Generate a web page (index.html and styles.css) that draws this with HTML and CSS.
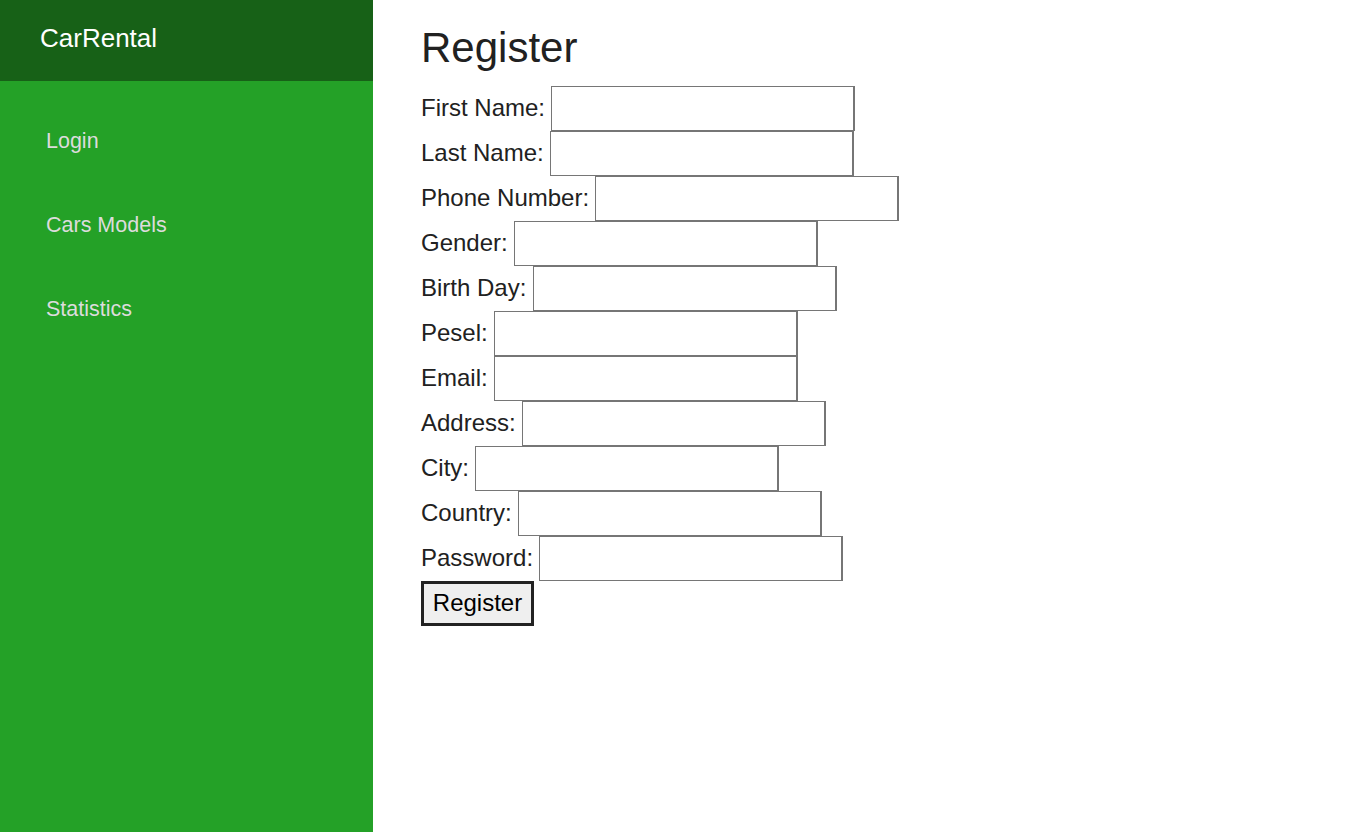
FILE: index.html
```html
<!DOCTYPE html>
<html>
<head>
<meta charset="utf-8">
<title>Register - CarRental</title>
<link rel="stylesheet" href="styles.css">
</head>
<body>
<aside class="sidebar">
  <div class="brand">CarRental</div>
  <nav class="nav">
    <a class="nav-item" href="#">Login</a>
    <a class="nav-item" href="#">Cars Models</a>
    <a class="nav-item" href="#">Statistics</a>
  </nav>
</aside>
<main class="main">
  <h1 class="title">Register</h1>
  <form class="form">
    <div class="row"><label>First Name:</label><input class="field" type="text"></div>
    <div class="row"><label>Last Name:</label><input class="field" type="text"></div>
    <div class="row"><label>Phone Number:</label><input class="field" type="text"></div>
    <div class="row"><label>Gender:</label><input class="field" type="text"></div>
    <div class="row"><label>Birth Day:</label><input class="field" type="text"></div>
    <div class="row"><label>Pesel:</label><input class="field" type="text"></div>
    <div class="row"><label>Email:</label><input class="field" type="text"></div>
    <div class="row"><label>Address:</label><input class="field" type="text"></div>
    <div class="row"><label>City:</label><input class="field" type="text"></div>
    <div class="row"><label>Country:</label><input class="field" type="text"></div>
    <div class="row"><label>Password:</label><input class="field" type="password"></div>
    <button class="submit" type="button">Register</button>
  </form>
</main>
</body>
</html>
```
FILE: styles.css
```css
html, body {
  margin: 0;
  padding: 0;
  height: 100%;
}
body {
  display: flex;
  font-family: "Liberation Sans", Arial, sans-serif;
  color: #212121;
  background: #ffffff;
}
.sidebar {
  width: 373px;
  flex: 0 0 373px;
  height: 832px;
  background: #24a127;
  display: flex;
  flex-direction: column;
}
.brand {
  height: 81px;
  background: #176117;
  color: #ffffff;
  font-size: 26px;
  padding-left: 40px;
  display: flex;
  align-items: center;
  box-sizing: border-box;
  padding-bottom: 4px;
}
.nav {
  display: flex;
  flex-direction: column;
  padding-top: 18px;
}
.nav-item {
  height: 84px;
  display: flex;
  align-items: center;
  padding-left: 46px;
  color: #dcdcdc;
  font-size: 21.5px;
  text-decoration: none;
}
.main {
  flex: 1;
  padding-left: 48px;
}
.title {
  font-size: 42px;
  font-weight: normal;
  margin: 24px 0 15px 0;
  line-height: 47px;
}
.form {
  display: flex;
  flex-direction: column;
  align-items: flex-start;
}
.row {
  display: flex;
  align-items: center;
  height: 45px;
  font-size: 24px;
}
.row label {
  margin-right: 6.4px;
  padding-bottom: 2px;
}
.field {
  width: 304px;
  height: 45px;
  box-sizing: border-box;
  border: 1px solid #767676;
  border-right-width: 2px;
  border-radius: 0;
  margin: 0;
  padding: 0 4px;
  font-size: 24px;
  background: #ffffff;
}
.submit {
  width: 113px;
  height: 45px;
  box-sizing: border-box;
  border: 3px solid #222222;
  border-radius: 0;
  background: #efefef;
  color: #000000;
  font-family: "Liberation Sans", Arial, sans-serif;
  font-size: 24px;
  padding: 0 6px 2px;
  margin: 0;
}
```
